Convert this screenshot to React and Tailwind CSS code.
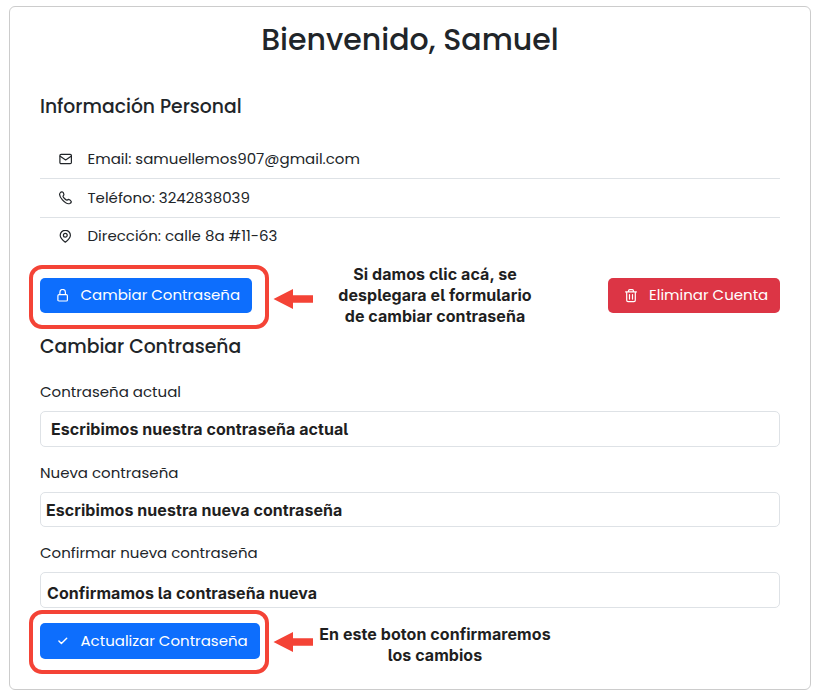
import React from "react";

const ui = "font-['Poppins','Inter',sans-serif] whitespace-nowrap";
const note = "font-['Inter',sans-serif] font-bold text-[#1f1f1f] tracking-[0.060px] [font-feature-settings:'cv05'] whitespace-nowrap";

function Icon({ children }) {
  return (
    <svg
      viewBox="0 0 14 14"
      className="size-[14px] shrink-0"
      fill="none"
      stroke="currentColor"
      strokeWidth="1.2"
      strokeLinecap="round"
      strokeLinejoin="round"
    >
      {children}
    </svg>
  );
}

const Envelope = () => (
  <Icon>
    <rect x="0.9" y="2.3" width="11.500" height="9.400" rx="1.200" />
    <path d="m1.200 4.300 5.450 3.700 5.450-3.700" />
  </Icon>
);

const Phone = () => (
  <Icon>
    <path transform="translate(-0.700 -0.200)" d="M4.300 1.300C3.600.9 2.500 1.300 1.800 2.200c-.9 1.200-.4 3.800 2.300 6.900 2.900 3.200 5.800 4.300 7.400 3.600 1-.5 1.600-1.700 1.300-2.300-.3-.5-2-1.800-2.600-1.900-.7-.1-1 .9-1.700.8C7.300 9.100 4.800 6.600 4.700 5.500c0-.6 1-.9.9-1.600-.1-.6-.8-2.300-1.300-2.600Z" />
  </Icon>
);

const Marker = () => (
  <Icon>
    <path d="M6.300 12.200C4.300 10.700 1.200 8.100 1.200 5.200a5.100 4.900 0 0 1 10.200 0c0 2.900-3.100 5.500-5.100 7Z" />
    <circle cx="6.300" cy="5.200" r="1.900" />
  </Icon>
);

const Lock = () => (
  <Icon>
    <rect x="2.900" y="5.600" width="9.500" height="6.400" rx="1.100" />
    <path d="M4.900 5.500V3.200a2.750 2.750 0 0 1 5.500 0V5.500" />
  </Icon>
);

const Trash = () => (
  <Icon>
    <path d="M1.600 2.900h10.800M2.700 3.100v8.200c0 .8.500 1.300 1.300 1.300h6c.8 0 1.300-.5 1.300-1.300V3.100M4.600 2.700V1.700c0-.7.400-1 1-1h2.800c.6 0 1 .3 1 1v1M5.500 5.600v4.500M8.500 5.600v4.500" />
  </Icon>
);

const Check = () => (
  <Icon>
    <path strokeWidth="1.400" d="m3.900 7 2.500 2.500 5.300-5.300" />
  </Icon>
);

const Arrow = () => (
  <svg viewBox="0 0 40 20" className="h-5 w-10 shrink-0" fill="#f44336">
    <path d="M0.500 10 20 0v6.200h20v7.600H20V20Z" />
  </svg>
);

function Row({ icon, children, className = "h-[39px] border-b border-[#dee2e6]" }) {
  return (
    <li className={`flex items-center gap-[14.500px] pl-[19px] text-[15px] ${className}`}>
      {icon}
      <span>{children}</span>
    </li>
  );
}

function Field({ label, value, valueClass }) {
  return (
    <div>
      <div className="flex h-[39px] items-center pt-px text-[15px]">{label}</div>
      <div className={`flex items-center rounded-[5px] border border-[#dee2e6] text-base ${note} ${valueClass}`}>
        <span>{value}</span>
      </div>
    </div>
  );
}

export default function App() {
  return (
    <div className={`h-[691px] bg-white pl-[9px] pt-1.5 text-[#212529] ${ui}`}>
      <main className="h-[684px] w-[802px] rounded-md border border-[#cccccc] px-[30px]">
        <h1 className="flex h-[65px] items-center justify-center text-[30px] font-medium">
          Bienvenido, Samuel
        </h1>
        <h2 className="mt-5 flex h-[30px] items-center text-[18.750px] font-medium">
          Información Personal
        </h2>
        <ul className="mt-[18px]">
          <Row icon={<Envelope />}>Email: samuellemos907@gmail.com</Row>
          <Row icon={<Phone />}>Teléfono: 3242838039</Row>
          <Row icon={<Marker />} className="h-[37px]">Dirección: calle 8a #11-63</Row>
        </ul>
        <section className="mt-[10px] flex h-16 items-center">
          <div className="-ml-[11px] flex h-16 w-60 shrink-0 items-center rounded-[13px] border-4 border-[#f44336] pl-[7px]">
            <button className="mb-[3px] flex h-[35px] w-[212px] shrink-0 items-center gap-[11.500px] rounded-[5px] bg-[#0d6efd] pl-[15px] text-[15px] text-white">
              <Lock />
              <span>Cambiar Contraseña</span>
            </button>
          </div>
          <div className="ml-1 mt-1"><Arrow /></div>
          <p className={`mb-1 ml-[22px] w-[200px] text-center text-base leading-[21px] ${note}`}>
            Si damos clic acá, se
            <br />
            desplegara el formulario
            <br />
            de cambiar contraseña
          </p>
          <button className="mb-[3px] ml-auto flex h-[35px] w-[172px] items-center gap-[11px] rounded-[5px] bg-[#dc3545] pl-4 text-[15px] text-white">
            <Trash />
            <span>Eliminar Cuenta</span>
          </button>
        </section>
        <h2 className="mt-[3px] flex h-[30px] items-center text-[18.750px] font-medium">
          Cambiar Contraseña
        </h2>
        <div className="mt-[10px] flex flex-col gap-[6px]">
          <Field label="Contraseña actual" value="Escribimos nuestra contraseña actual" valueClass="h-9 pl-[10px]" />
          <Field label="Nueva contraseña" value="Escribimos nuestra nueva contraseña" valueClass="h-[35px] pl-[5px]" />
          <Field label="Confirmar nueva contraseña" value="Confirmamos la contraseña nueva" valueClass="h-9 pl-[6px] pt-[6px]" />
        </div>
        <section className="mt-[2px] flex h-16 items-center">
          <div className="-ml-[11px] flex h-16 w-60 shrink-0 items-center rounded-[13px] border-4 border-[#f44336] pl-[7px]">
            <button className="mb-[2px] flex h-9 w-[220px] shrink-0 items-center gap-[11.500px] rounded-[5px] bg-[#0d6efd] pl-[15px] text-[15px] text-white">
              <Check />
              <span>Actualizar Contraseña</span>
            </button>
          </div>
          <div className="ml-1"><Arrow /></div>
          <p className={`ml-[2px] mt-[6px] w-[240px] text-center text-base leading-[21px] ${note}`}>
            En este boton confirmaremos
            <br />
            los cambios
          </p>
        </section>
      </main>
    </div>
  );
}
